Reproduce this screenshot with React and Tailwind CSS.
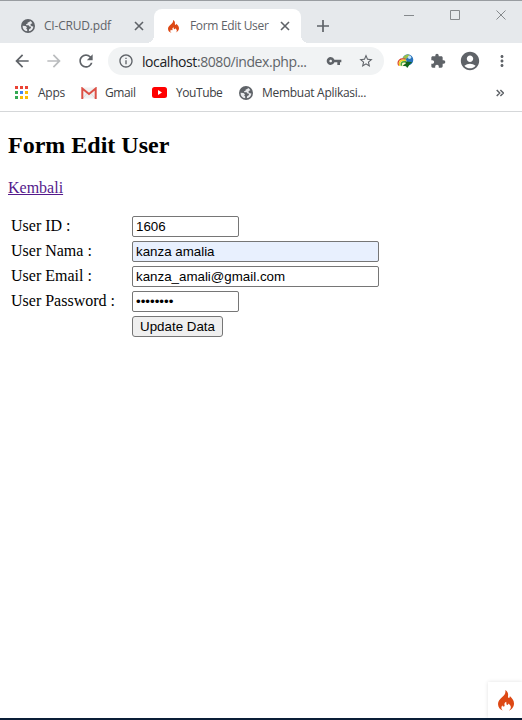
import React from "react";
import {
  MdArrowBack, MdArrowForward, MdRefresh, MdInfoOutline, MdVpnKey, MdStarBorder,
  MdExtension, MdAccountCircle, MdMoreVert,
} from "react-icons/md";

function Flame({ className }) {
  return (
    <svg viewBox="0 0 16 21" preserveAspectRatio="none" className={className} fill="#dd4814">
      <path d="M7.3 0C10 1.600 10.400 3.800 10 6.200c-.1 1 .2 1.700.9 1.700.8 0 1-.8.9-1.900C14.200 8.100 16 10.500 16 13.500c0 3.600-2.300 6.300-5.500 7.200 1.500-1 2.500-2.200 2.300-3.900-.2-1.500-1.300-2.200-2.300-3.300-.2 1-.7 1.500-1.400 1.400-.9-.2-.6-1.600-.9-3.100-1.400.8-2 1.800-1.700 3.100.3 1 0 1.700-.9 1.700-.8 0-1.100-.6-1.200-1.400-1.700 2.200-1.200 4.500 1 5.600C2 19.900 0 17.500 0 14.100c0-2.900 1.900-4.800 4-6.800C6.300 5.100 8 3.200 7.300 0Z" />
    </svg>
  );
}

function Close() {
  return (
    <svg viewBox="0 0 14 14" className="size-[14px]" fill="none" stroke="currentColor" strokeWidth="1.6">
      <path d="m3 3 8 8m0-8-8 8" />
    </svg>
  );
}

function Globe({ className }) {
  return (
    <svg viewBox="0 0 14 14" className={className}>
      <circle cx="7" cy="7" r="7" fill="#5f6368" />
      <path d="M8.800 1.700C9.200 3 7.900 3.300 6.700 3.500L6.500 4.800 5 5.300 5.300 6.300H7.600L8.500 7.400 10.200 7.800 9.500 9.500 8.200 10.100 7.800 12.300A5.400 5.400 0 0 0 12.400 7.500L10.900 7.200 9.500 6.200 9.700 5.100 11.400 4.200A5.600 5.600 0 0 0 8.800 1.700Z" fill="#e8eaed" />
      <path d="M1.600 6.700 4.500 7 6 8.300 5.200 9.500 6.200 10.500V12.300A5.500 5.500 0 0 1 1.600 6.700Z" fill="#e8eaed" />
    </svg>
  );
}

function Gmail() {
  return (
    <svg viewBox="0 0 16 12" className="h-3 w-4">
      <path d="M1 .5h14v11H1Z" fill="#f1f1f1" />
      <path d="m2 11 4-4.5M14 11l-4-4.5" stroke="#ccc" strokeWidth=".6" />
      <path d="M1.3 12V1.500L8 7l6.700-5.500V12" fill="none" stroke="#dc5045" strokeWidth="2" />
    </svg>
  );
}

function DownloadManager() {
  return (
    <svg viewBox="0 0 17 16" className="h-4 w-[17px]">
      <circle cx="10.8" cy="6.8" r="5.500" fill="#2973bd" />
      <path d="M6 4.500Q8 1.200 12 1.500L12.500 3 10 5 8.500 7 6 6.500Z" fill="#9bc14a" />
      <circle cx="12.5" cy="4.300" r="1.700" fill="#c4e3f4" />
      <ellipse cx="5.300" cy="9.600" rx="4.700" ry="4" fill="#fff7cf" />
      <path d="M1.700 12.500C-.2 8 3 4.700 8.500 6.200" fill="none" stroke="#d8382e" strokeWidth="1.200" />
      <path d="M2.800 12.800C1.500 8.500 4 6.200 9 7.600" fill="none" stroke="#f5d327" strokeWidth="1.500" />
      <path d="M4.500 12.800C3.500 10 5 8.300 8.500 9" fill="none" stroke="#45a83a" strokeWidth="1.500" />
      <path d="M7.500 8.200 15.300 9.200 13.300 10.700 10.200 15 9 13.300 5.500 12.800 9 10.300Z" fill="#12651c" />
    </svg>
  );
}

const appColors = [
  "bg-[#ea4335]", "bg-[#ea4335]", "bg-[#ea4335]",
  "bg-[#34a853]", "bg-[#4285f4]", "bg-[#fbbc05]",
  "bg-[#34a853]", "bg-[#fbbc05]", "bg-[#fbbc05]",
];

function TabStrip() {
  return (
    <header className="flex h-[43px] border-t border-[#999da1] bg-[#e6e9ec] text-[12px] text-[#5f6368]">
      <div className="flex w-[154px] items-center pt-2 pl-[21px]">
        <Globe className="size-[14px]" />
        <span className="ml-[9px] w-[88px] tracking-[-0.2px] whitespace-nowrap">CI-CRUD.pdf</span>
        <Close />
      </div>
      <div className="relative mt-2 flex w-[147px] items-center rounded-t-lg bg-white pl-[14px]">
        <span className="absolute bottom-0 -left-2 size-2 bg-[radial-gradient(circle_at_0_0,#e6e9ec_8px,white_8px)]" />
        <span className="absolute -right-2 bottom-0 size-2 bg-[radial-gradient(circle_at_100%_0,#e6e9ec_8px,white_8px)]" />
        <Flame className="h-[13px] w-[11px]" />
        <span className="ml-[11px] w-[88px] tracking-[-0.33px] whitespace-nowrap">Form Edit User</span>
        <Close />
      </div>
      <svg viewBox="0 0 18 18" className="mt-4 ml-[13px] size-[18px]" fill="none" stroke="#5f6368" strokeWidth="1.7">
        <path d="M9 3v12M3 9h12" />
      </svg>
      <svg viewBox="0 0 103 12" className="mt-2 ml-[72px] h-3 w-[103px]" fill="none" stroke="#85898c">
        <path d="M0 6.5h10M46.5 1.5h9v9h-9ZM92.5 1.5l9 9m0-9-9 9" />
      </svg>
    </header>
  );
}

function AddressBar() {
  return (
    <div className="flex h-9 items-center bg-white pl-3 text-[#5f6368]">
      <MdArrowBack className="size-5" />
      <MdArrowForward className="ml-3 size-5 text-[#babcbe]" />
      <MdRefresh className="ml-3 size-5" />
      <div className="ml-3 flex h-7 w-[276px] shrink-0 items-center rounded-full bg-[#f1f3f4] pl-[10px]">
        <MdInfoOutline className="size-4" />
        <span className="ml-2 w-[184px] text-[14px] tracking-[-0.42px] whitespace-nowrap"><span className="text-[#202124]">localhost</span>:8080/index.php...</span>
        <MdVpnKey className="size-4" />
        <MdStarBorder className="ml-4 size-4" />
      </div>
      <div className="ml-[13px]"><DownloadManager /></div>
      <MdExtension className="ml-4 size-4" />
      <MdAccountCircle className="ml-[13px] size-[22px]" />
      <MdMoreVert className="ml-3 size-[18px]" />
    </div>
  );
}

function Bookmarks() {
  return (
    <nav className="flex h-[33px] items-center border-b border-[#d5d7d9] bg-white pb-[5px] pl-[15px] text-[12px] whitespace-nowrap text-[#3c4043]">
      <div className="grid grid-cols-3 gap-[2px]">
        {appColors.map((color, i) => <span key={i} className={"size-[3px] " + color} />)}
      </div>
      <span className="ml-[10px] w-[43px] tracking-[-0.25px]">Apps</span>
      <Gmail />
      <span className="ml-2 w-[47px] tracking-[-0.4px]">Gmail</span>
      <svg viewBox="0 0 15 11" className="h-[11px] w-[15px]">
        <rect width="15" height="11" rx="2.5" fill="red" /><path d="M6 3v5l4-2.5Z" fill="white" />
      </svg>
      <span className="ml-[9px] w-[63px] tracking-[-0.42px]">YouTube</span>
      <Globe className="size-[14px]" />
      <span className="ml-[9px] w-[234px] tracking-[-0.29px]">Membuat Aplikasi...</span>
      <svg viewBox="0 0 8 8" className="size-2" fill="none" stroke="#5f6368" strokeWidth="1.5"><path d="m.7 1 3 3-3 3m3.7-6 3 3-3 3" /></svg>
    </nav>
  );
}

function Field({ label, width, value, type = "text", fill = "bg-white" }) {
  return (
    <label className="flex h-[21px] items-center">
      <span className="w-[121px] shrink-0 pb-[2px]">{label}</span>
      <input
        type={type}
        defaultValue={value}
        className={"h-[21px] rounded-[2px] border border-[#767676] px-[3px] font-['Liberation_Sans',Arial,sans-serif] text-[13.333px] text-black outline-none " + fill + " " + width}
      />
    </label>
  );
}

export default function App() {
  return (
    <div className="flex h-[720px] w-[522px] flex-col overflow-hidden bg-white font-['Open_Sans',sans-serif]">
      <TabStrip />
      <AddressBar />
      <Bookmarks />
      <main className="relative flex-1 border-b-2 border-[#0a1e37] px-2 font-['Liberation_Serif',serif] text-[16px] leading-[18px] text-black">
        <h2 className="mt-5 text-[24px] leading-[27px] font-bold">Form Edit User</h2>
        <a href="#" className="mt-5 block w-max text-[#551a8b] underline">Kembali</a>
        <form className="mt-[19px] flex flex-col gap-1 pl-[3px]">
          <Field label="User ID :" value="1606" width="w-[107px]" />
          <Field label="User Nama :" value="kanza amalia" width="w-[247px]" fill="bg-[#e8f0fe]" />
          <Field label="User Email :" value="kanza_amali@gmail.com" width="w-[247px]" />
          <Field label="User Password :" value="password" type="password" width="w-[107px]" />
          <button type="button" className="ml-[121px] h-[21px] w-[91px] rounded-[3px] border border-[#767676] bg-[#efefef] font-['Liberation_Sans',Arial,sans-serif] text-[13.333px] leading-[18px]">Update Data</button>
        </form>
        <div className="absolute right-0 bottom-0 flex h-9 w-[34px] items-center justify-center bg-white pl-[2px] shadow-[0_0_4px_rgba(0,0,0,0.12)]">
          <Flame className="h-[21px] w-4" />
        </div>
      </main>
    </div>
  );
}
